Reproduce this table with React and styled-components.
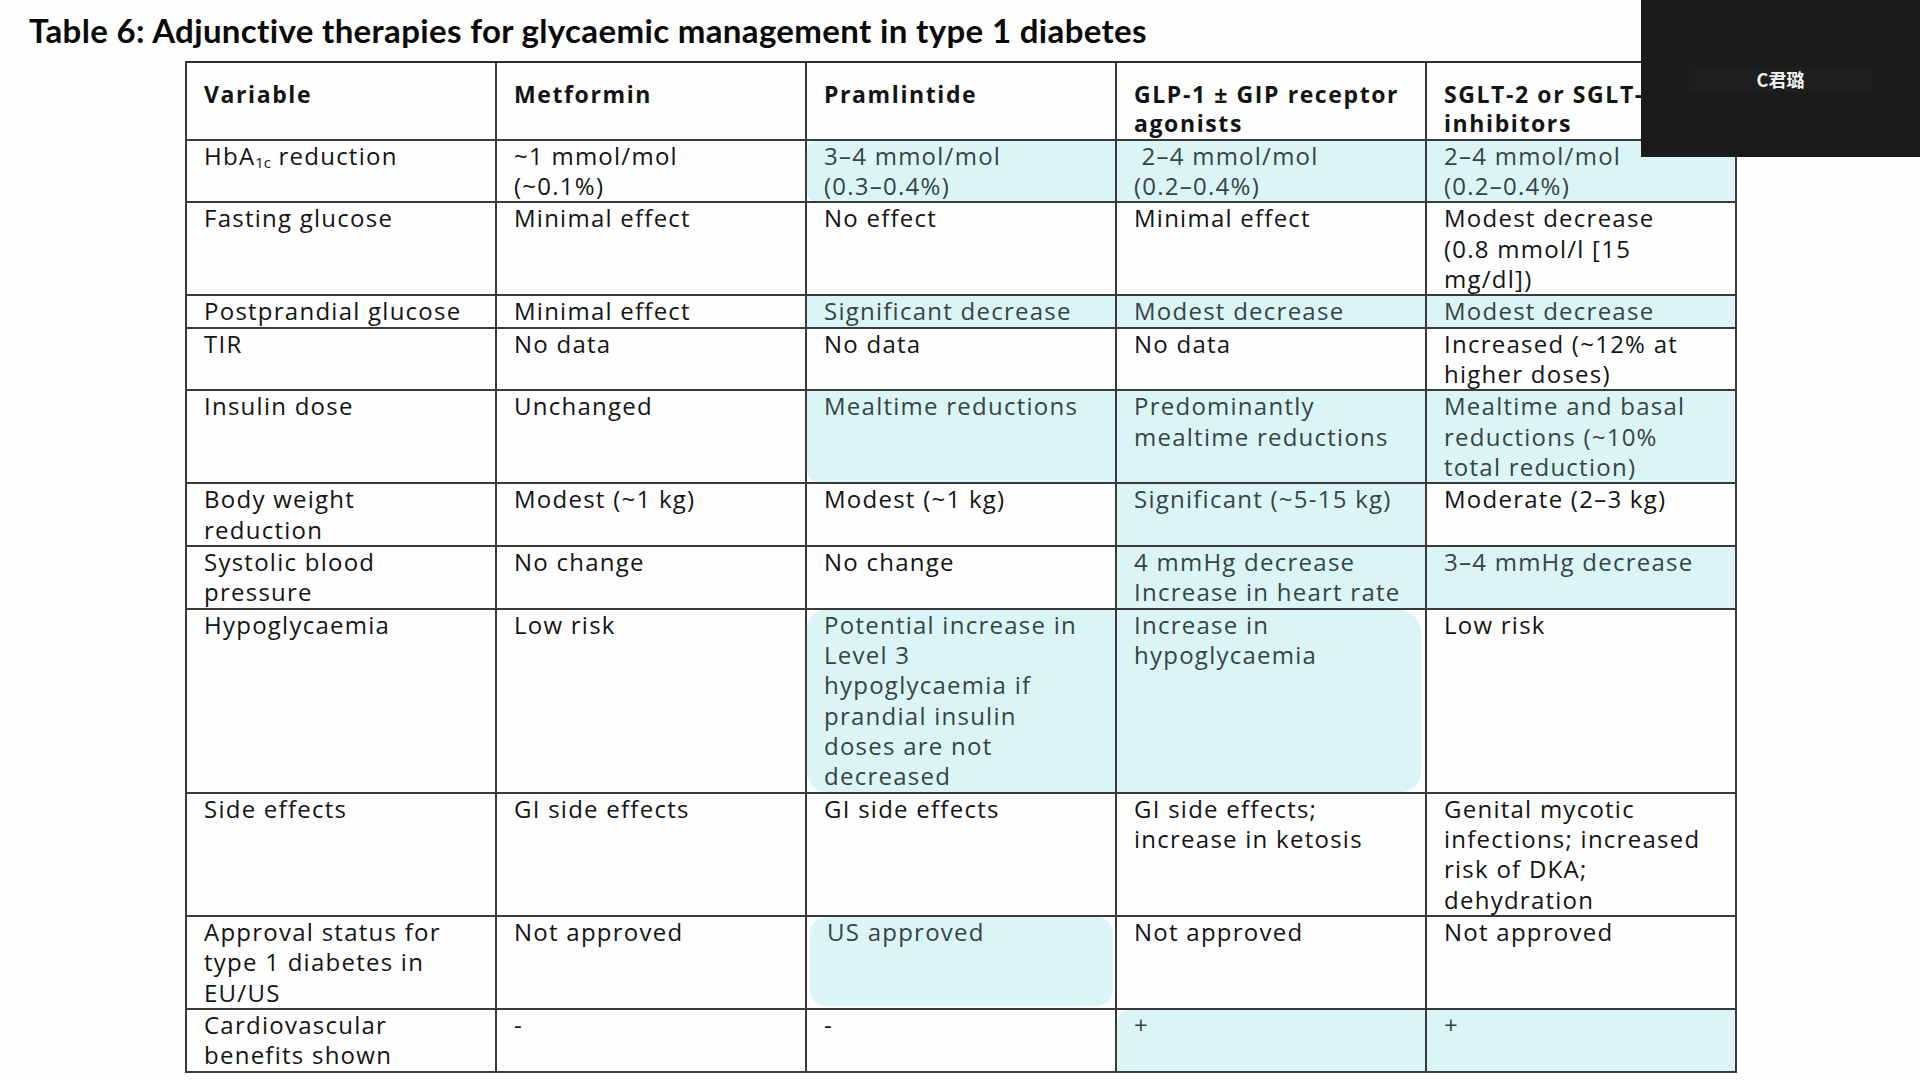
import React from 'react'
import styled, { createGlobalStyle } from 'styled-components'

const Global = createGlobalStyle`
  html, body {
    margin: 0;
    padding: 0;
    background: #ffffff;
  }
  body {
    width: 1920px;
    height: 1080px;
    overflow: hidden;
    font-family: "Open Sans", "Liberation Sans", sans-serif;
  }
`

const Page = styled.div`
  position: relative;
  width: 1920px;
  height: 1080px;
  display: flex;
  flex-direction: column;
  background: #fefefe;
`

const Title = styled.h1`
  margin: 0;
  padding: 11px 0 0 29px;
  height: 50px;
  box-sizing: border-box;
  font-family: Lato, "Liberation Sans", sans-serif;
  font-weight: 700;
  font-size: 33px;
  line-height: 38px;
  color: #0a0a0a;
  letter-spacing: 0.35px;
  white-space: nowrap;
`

const Grid = styled.div`
  margin: 11px 0 0 185px;
  width: 1552px;
  display: grid;
  grid-template-columns: repeat(5, 1fr);
  border-top: 2px solid #2e2e2e;
  border-left: 2px solid #3a3a3a;
  box-sizing: border-box;
`

const Cell = styled.div`
  display: flex;
  border-right: 2px solid #3a3a3a;
  border-bottom: 2px solid #3a3a3a;
  min-width: 0;
`

const Fill = styled.div`
  flex: 1;
  padding: ${p => (p.$head ? '16.5px 0 0 17px' : '0 0 0 17px')};
  margin: ${p => p.$inset || '0'};
  background: ${p => (p.$hl ? '#dbf4f5' : 'transparent')};
  border-radius: ${p => p.$radius || '0'};
  color: ${p => (p.$hl ? '#354545' : '#141414')};
  font-size: ${p => (p.$head ? '23px' : '24px')};
  font-weight: ${p => (p.$head ? 700 : 400)};
  line-height: ${p => (p.$head ? '29.5px' : '30.35px')};
  letter-spacing: ${p => (p.$head ? '1.6px' : '1.25px')};
  white-space: nowrap;
`

const Sub = styled.span`
  font-size: 0.62em;
  vertical-align: -0.22em;
  line-height: 0;
  letter-spacing: 0;
`

const Overlay = styled.div`
  position: absolute;
  top: 0;
  right: 0;
  width: 279px;
  height: 157px;
  background: #1b1b1b;
  display: flex;
  align-items: flex-start;
  justify-content: center;
  padding-top: 66px;
  box-sizing: border-box;
`

const NameBand = styled.div`
  width: 183px;
  height: 26px;
  background: #1e1e1e;
  display: flex;
  align-items: center;
  justify-content: center;
  color: #f2f2f2;
  font-family: "Noto Sans CJK SC", "Noto Sans", sans-serif;
  font-weight: 700;
  font-size: 18px;
`

const header = [
  ['Variable'],
  ['Metformin'],
  ['Pramlintide'],
  ['GLP-1 ± GIP receptor', 'agonists'],
  ['SGLT-2 or SGLT-1/2', 'inhibitors'],
]

// each cell: lines, hl (highlight), r (radius), m (inset margin)
const rows = [
  [
    { lines: [<>HbA<Sub>1c</Sub> reduction</>] },
    { lines: ['~1 mmol/mol', '(~0.1%)'] },
    { lines: ['3–4 mmol/mol', '(0.3–0.4%)'], hl: true, r: '8px 0 0 8px' },
    { lines: ['\u00a02–4 mmol/mol', '(0.2–0.4%)'], hl: true },
    { lines: ['2–4 mmol/mol', '(0.2–0.4%)'], hl: true },
  ],
  [
    { lines: ['Fasting glucose'] },
    { lines: ['Minimal effect'] },
    { lines: ['No effect'] },
    { lines: ['Minimal effect'] },
    { lines: ['Modest decrease', '(0.8 mmol/l [15', 'mg/dl])'] },
  ],
  [
    { lines: ['Postprandial glucose'] },
    { lines: ['Minimal effect'] },
    { lines: ['Significant decrease'], hl: true },
    { lines: ['Modest decrease'], hl: true },
    { lines: ['Modest decrease'], hl: true },
  ],
  [
    { lines: ['TIR'] },
    { lines: ['No data'] },
    { lines: ['No data'] },
    { lines: ['No data'] },
    { lines: ['Increased (~12% at', 'higher doses)'] },
  ],
  [
    { lines: ['Insulin dose'] },
    { lines: ['Unchanged'] },
    { lines: ['Mealtime reductions'], hl: true, r: '0 0 0 12px' },
    { lines: ['Predominantly', 'mealtime reductions'], hl: true },
    { lines: ['Mealtime and basal', 'reductions (~10%', 'total reduction)'], hl: true },
  ],
  [
    { lines: ['Body weight', 'reduction'] },
    { lines: ['Modest (~1 kg)'] },
    { lines: ['Modest (~1 kg)'] },
    { lines: ['Significant (~5-15 kg)'], hl: true },
    { lines: ['Moderate (2–3 kg)'] },
  ],
  [
    { lines: ['Systolic blood', 'pressure'] },
    { lines: ['No change'] },
    { lines: ['No change'] },
    { lines: ['4 mmHg decrease', 'Increase in heart rate'], hl: true },
    { lines: ['3–4 mmHg decrease'], hl: true },
  ],
  [
    { lines: ['Hypoglycaemia'] },
    { lines: ['Low risk'] },
    {
      lines: ['Potential increase in', 'Level 3', 'hypoglycaemia if', 'prandial insulin', 'doses are not', 'decreased'],
      hl: true,
      r: '18px 0 0 20px',
    },
    { lines: ['Increase in', 'hypoglycaemia'], hl: true, r: '0 22px 20px 0', m: '0 4px 0 0' },
    { lines: ['Low risk'] },
  ],
  [
    { lines: ['Side effects'] },
    { lines: ['GI side effects'] },
    { lines: ['GI side effects'] },
    { lines: ['GI side effects;', 'increase in ketosis'] },
    { lines: ['Genital mycotic', 'infections; increased', 'risk of DKA;', 'dehydration'] },
  ],
  [
    { lines: ['Approval status for', 'type 1 diabetes in', 'EU/US'] },
    { lines: ['Not approved'] },
    { lines: ['US approved'], hl: true, r: '16px', m: '0 2px 2px 3px' },
    { lines: ['Not approved'] },
    { lines: ['Not approved'] },
  ],
  [
    { lines: ['Cardiovascular', 'benefits shown'] },
    { lines: ['-'] },
    { lines: ['-'] },
    { lines: ['+'], hl: true, r: '12px 0 0 0' },
    { lines: ['+'], hl: true },
  ],
]

const Lines = ({ lines }) =>
  lines.map((l, i) => (
    <React.Fragment key={i}>
      {i > 0 && <br />}
      {l}
    </React.Fragment>
  ))

export default function App() {
  return (
    <Page>
      <Global />
      <Title>Table 6: Adjunctive therapies for glycaemic management in type 1 diabetes</Title>
      <Grid>
        {header.map((h, i) => (
          <Cell key={'h' + i}>
            <Fill $head>
              <Lines lines={h} />
            </Fill>
          </Cell>
        ))}
        {rows.map((row, ri) =>
          row.map((c, ci) => (
            <Cell key={ri + '-' + ci}>
              <Fill $hl={c.hl} $radius={c.r} $inset={c.m}>
                <Lines lines={c.lines} />
              </Fill>
            </Cell>
          ))
        )}
      </Grid>
      <Overlay>
        <NameBand>C君璐</NameBand>
      </Overlay>
    </Page>
  )
}
